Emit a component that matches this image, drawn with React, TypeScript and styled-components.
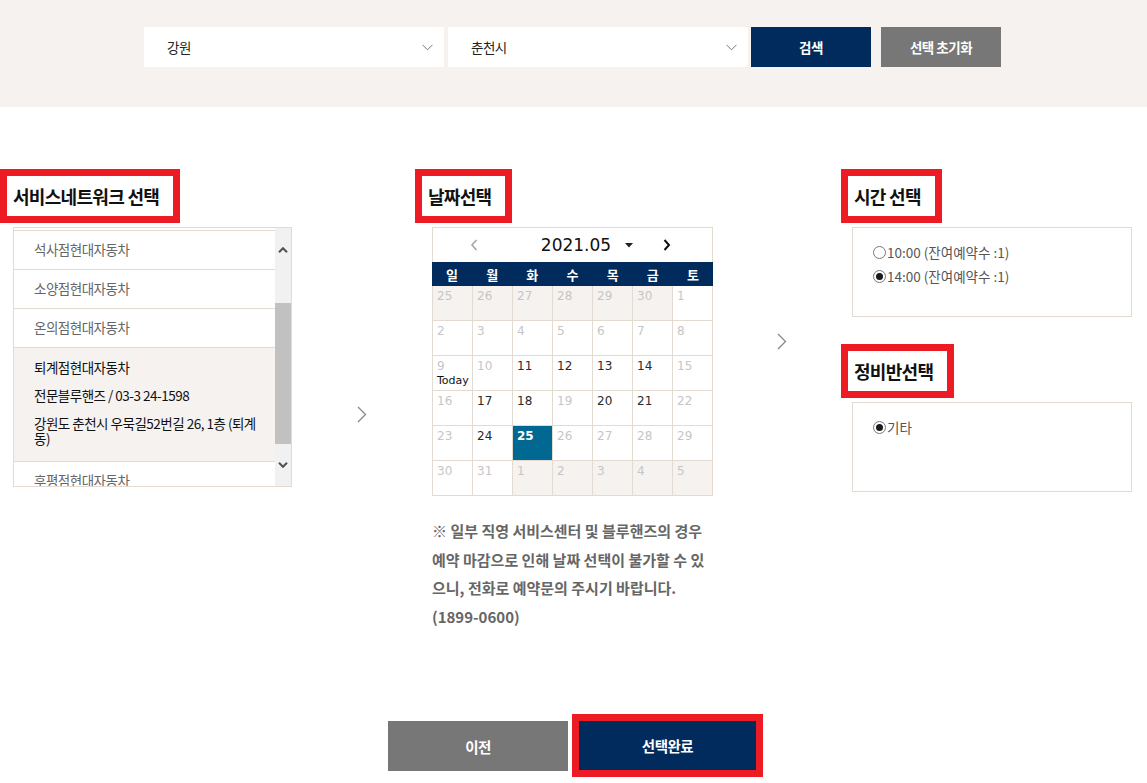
import React, { useLayoutEffect, useRef } from 'react'
import styled, { createGlobalStyle } from 'styled-components'

const KR = `"Noto Sans CJK KR", "Noto Sans", sans-serif`
const NUM = `"DejaVu Sans", Verdana, sans-serif`
const NAVY = '#002b5c'
const LINE = '#e3dbd1'
const RED = '#ed1c24'

const GlobalStyle = createGlobalStyle`
  html, body { margin: 0; padding: 0; background: #fff; }
  body { font-family: ${KR}; color: #222; }
  * { box-sizing: border-box; }
`

const Page = styled.div`
  width: 100%;
  min-height: 100vh;
`

/* ---------- top search bar ---------- */

const TopBar = styled.div`
  height: 107px;
  background: #f5f2f0;
  display: flex;
  justify-content: center;
  padding: 27px 2px 0 0;
`

const SearchRow = styled.div`
  display: flex;
  gap: 4px;
  height: 40px;
`

const Select = styled.div`
  width: 300px;
  height: 40px;
  background: #fff;
  display: flex;
  align-items: center;
  justify-content: space-between;
  padding: 0 11px 0 23px;
  font-size: 13.5px;
  letter-spacing: -0.5px;
  color: #222;
`

const BarButton = styled.button<{ $gray?: boolean }>`
  width: 120px;
  height: 40px;
  border: none;
  margin-left: ${({ $gray }) => ($gray ? 6 : -1)}px;
  background: ${({ $gray }) => ($gray ? '#777' : NAVY)};
  color: #fff;
  font-family: ${KR};
  font-size: 13.5px;
  font-weight: 700;
  letter-spacing: -0.5px;
`

/* ---------- main three columns ---------- */

const Main = styled.div`
  display: flex;
  align-items: flex-start;
  padding-top: 62px;
`

const Column = styled.div<{ $w: number }>`
  flex: none;
  width: ${({ $w }) => $w}px;
  display: flex;
  flex-direction: column;
  align-items: flex-start;
`

const SectionTitle = styled.h2`
  margin: 0 0 4px;
  border: 7px solid ${RED};
  padding: 0 14px 0 6px;
  font-size: 18px;
  font-weight: 700;
  letter-spacing: -0.7px;
  line-height: 40px;
  color: #111;
  white-space: nowrap;
`

const Connector = styled.div<{ $w: number; $top: number; $shift: number }>`
  flex: none;
  width: ${({ $w }) => $w}px;
  padding-top: ${({ $top }) => $top}px;
  padding-left: ${({ $shift }) => $shift}px;
  display: flex;
  justify-content: center;
`

/* ---------- service network list ---------- */

const ListBox = styled.div`
  margin-left: 13px;
  width: 279px;
  height: 260px;
  border: 1px solid ${LINE};
  display: flex;
`

const ListViewport = styled.div`
  width: 261px;
  height: 100%;
  overflow: hidden;
`

const ListItem = styled.div`
  height: 39px;
  border-bottom: 1px solid ${LINE};
  padding: 0 0 2px 20px;
  display: flex;
  align-items: center;
  font-size: 13.5px;
  letter-spacing: -0.5px;
  color: #666;
`

const DetailItem = styled.div`
  background: #f5f2f0;
  border-bottom: 1px solid ${LINE};
  padding: 12px 4px 16px 20px;
  font-size: 13.5px;
  letter-spacing: -0.5px;
  color: #111;
`

const DetailLine = styled.div`
  line-height: 14px;
  white-space: nowrap;
  & + & {
    margin-top: 14px;
  }
`

const AddressLine = styled(DetailLine)`
  line-height: 14.5px;
`

const ScrollBar = styled.div`
  flex: none;
  width: 16px;
  background: #f1f1f1;
  display: flex;
  flex-direction: column;
`

const ScrollButton = styled.div<{ $pad: number }>`
  flex: none;
  height: 40px;
  padding-top: ${({ $pad }) => $pad}px;
  display: flex;
  justify-content: center;
  align-items: flex-start;
`

const ScrollTrack = styled.div`
  flex: 1;
  padding-top: 35px;
`

const ScrollThumb = styled.div`
  height: 141px;
  background: #c1c1c1;
`

/* ---------- calendar ---------- */

const Calendar = styled.div`
  margin-left: 17px;
  width: 281px;
`

const CalHead = styled.div`
  height: 35px;
  border: 1px solid ${LINE};
  border-bottom: none;
  display: flex;
  align-items: center;
  justify-content: center;
  padding-right: 4px;
`

const MonthLabel = styled.span`
  margin-left: 63px;
  font-family: ${NUM};
  font-size: 17px;
  color: #111;
`

const WeekRow = styled.div`
  display: grid;
  grid-template-columns: repeat(7, 1fr);
  height: 24px;
  background: ${NAVY};
  align-items: center;
  text-align: center;
  color: #fff;
  font-size: 13px;
  font-weight: 700;
`

const DayGrid = styled.div`
  display: grid;
  grid-template-columns: repeat(7, 40px);
  border-left: 1px solid ${LINE};
`

type Kind = 'other' | 'off' | 'on' | 'sel'

const DayCell = styled.div<{ $kind: Kind }>`
  height: 35px;
  border-right: 1px solid ${LINE};
  border-bottom: 1px solid ${LINE};
  padding: 3px 0 0 4px;
  font-family: ${NUM};
  font-size: 12px;
  line-height: 15px;
  font-weight: ${({ $kind }) => ($kind === 'sel' ? 700 : 400)};
  background: ${({ $kind }) =>
    $kind === 'other' ? '#f5f2f0' : $kind === 'sel' ? '#006891' : '#fff'};
  color: ${({ $kind }) =>
    $kind === 'on' ? '#2a2a2a' : $kind === 'sel' ? '#fff' : '#c6c6c6'};
`

const TodayMark = styled.span`
  display: block;
  font-size: 11px;
  line-height: 13px;
  color: #111;
`

const Notice = styled.p`
  margin: 21px 0 0 17px;
  font-size: 15px;
  font-weight: 700;
  line-height: 28.5px;
  letter-spacing: 0;
  color: #666;
  white-space: nowrap;
`

/* ---------- right options ---------- */

const OptionBox = styled.div<{ $gap?: number }>`
  margin-left: 11px;
  margin-bottom: ${({ $gap }) => $gap ?? 0}px;
  width: 280px;
  height: 90px;
  border: 1px solid ${LINE};
  padding: 12px 20px 0;
`

const RadioRow = styled.label`
  display: flex;
  align-items: center;
  height: 24px;
  font-size: 13.5px;
  color: #555;
`

const RadioDot = styled.span<{ $checked?: boolean }>`
  flex: none;
  width: 13px;
  height: 13px;
  margin-right: 1px;
  border-radius: 50%;
  border: 1px solid #777;
  background: #fff;
  display: flex;
  align-items: center;
  justify-content: center;
  &::after {
    content: '';
    width: 7px;
    height: 7px;
    border-radius: 50%;
    background: ${({ $checked }) => ($checked ? '#1a1a1a' : 'transparent')};
  }
`

/* ---------- footer ---------- */

const Footer = styled.div`
  display: flex;
  justify-content: center;
  gap: 11px;
  margin-top: 90px;
  padding-right: 3px;
`

const FooterButton = styled.button<{ $primary?: boolean }>`
  width: ${({ $primary }) => ($primary ? 177 : 180)}px;
  height: ${({ $primary }) => ($primary ? 49 : 50)}px;
  border: none;
  background: ${({ $primary }) => ($primary ? NAVY : '#777')};
  outline: ${({ $primary }) => ($primary ? `7px solid ${RED}` : 'none')};
  color: #fff;
  font-family: ${KR};
  font-size: 14.5px;
  font-weight: 700;
  letter-spacing: -0.5px;
`

/* ---------- icons ---------- */

const SelectChevron = () => (
  <svg width="11" height="7" viewBox="0 0 11 7">
    <path d="M0.5 0.8 L5.5 5.8 L10.5 0.8" fill="none" stroke="#777" strokeWidth="1" />
  </svg>
)

const StepArrow = () => (
  <svg width="10" height="17" viewBox="0 0 10 17">
    <path d="M1 1 L8.5 8.5 L1 16" fill="none" stroke="#888" strokeWidth="1.3" />
  </svg>
)

const ScrollArrow = ({ up }: { up?: boolean }) => (
  <svg width="10" height="6" viewBox="0 0 10 6">
    <path
      d={up ? 'M1 5.2 L5 1.2 L9 5.2' : 'M1 0.8 L5 4.8 L9 0.8'}
      fill="none"
      stroke="#505050"
      strokeWidth="2"
    />
  </svg>
)

const CalPrev = () => (
  <svg width="8" height="12" viewBox="0 0 8 12">
    <path d="M6.5 1 L2 6 L6.5 11" fill="none" stroke="#a5a5a5" strokeWidth="1.6" />
  </svg>
)

const CalNext = () => (
  <svg width="8" height="12" viewBox="0 0 8 12" style={{ marginLeft: 30 }}>
    <path d="M1.5 1 L6 6 L1.5 11" fill="none" stroke="#111" strokeWidth="2" />
  </svg>
)

const Caret = () => (
  <svg width="8" height="5" viewBox="0 0 8 5" style={{ marginLeft: 14 }}>
    <path d="M0 0 L8 0 L4 4.5 Z" fill="#222" />
  </svg>
)

/* ---------- data ---------- */

const weekdays = ['일', '월', '화', '수', '목', '금', '토']

type Day = { d: number; k: Kind; today?: boolean }

const offRow = (from: number): Day[] =>
  Array.from({ length: 7 }, (_, i) => ({ d: from + i, k: 'off' as Kind }))

const onDays = new Set([11, 12, 13, 14, 17, 18, 20, 21, 24])

const monthRows = (): Day[][] => {
  const first: Day[] = [25, 26, 27, 28, 29, 30].map((d) => ({ d, k: 'other' as Kind }))
  first.push({ d: 1, k: 'off' })
  const rows: Day[][] = [first, offRow(2)]
  for (let start = 9; start <= 23; start += 7) {
    rows.push(
      Array.from({ length: 7 }, (_, i) => {
        const d = start + i
        const k: Kind = d === 25 ? 'sel' : onDays.has(d) ? 'on' : 'off'
        return { d, k, today: d === 9 }
      })
    )
  }
  rows.push([
    { d: 30, k: 'off' },
    { d: 31, k: 'off' },
    ...[1, 2, 3, 4, 5].map((d) => ({ d, k: 'other' as Kind })),
  ])
  return rows
}

const shopsBefore = ['사농점현대자동차', '석사점현대자동차', '소양점현대자동차', '온의점현대자동차']
const shopsAfter = ['후평점현대자동차']

export default function App() {
  const listRef = useRef<HTMLDivElement>(null)

  useLayoutEffect(() => {
    if (listRef.current) listRef.current.scrollTop = 36
  }, [])

  return (
    <Page>
      <GlobalStyle />
      <TopBar>
        <SearchRow>
          <Select>
            강원
            <SelectChevron />
          </Select>
          <Select>
            춘천시
            <SelectChevron />
          </Select>
          <BarButton>검색</BarButton>
          <BarButton $gray>선택 초기화</BarButton>
        </SearchRow>
      </TopBar>

      <Main>
        <Column $w={292}>
          <SectionTitle>서비스네트워크 선택</SectionTitle>
          <ListBox>
            <ListViewport ref={listRef}>
              {shopsBefore.map((s) => (
                <ListItem key={s}>{s}</ListItem>
              ))}
              <DetailItem>
                <DetailLine>퇴계점현대자동차</DetailLine>
                <DetailLine>전문블루핸즈 / 03-3 24-1598</DetailLine>
                <AddressLine>
                  강원도 춘천시 우묵길52번길 26, 1층 (퇴계
                  <br />
                  동)
                </AddressLine>
              </DetailItem>
              {shopsAfter.map((s) => (
                <ListItem key={s}>{s}</ListItem>
              ))}
            </ListViewport>
            <ScrollBar>
              <ScrollButton $pad={19}>
                <ScrollArrow up />
              </ScrollButton>
              <ScrollTrack>
                <ScrollThumb />
              </ScrollTrack>
              <ScrollButton $pad={16}>
                <ScrollArrow />
              </ScrollButton>
            </ScrollBar>
          </ListBox>
        </Column>

        <Connector $w={123} $top={237} $shift={16}>
          <StepArrow />
        </Connector>

        <Column $w={297}>
          <SectionTitle>날짜선택</SectionTitle>
          <Calendar>
            <CalHead>
              <CalPrev />
              <MonthLabel>2021.05</MonthLabel>
              <Caret />
              <CalNext />
            </CalHead>
            <WeekRow>
              {weekdays.map((w) => (
                <span key={w}>{w}</span>
              ))}
            </WeekRow>
            <DayGrid>
              {monthRows().map((row, ri) =>
                row.map((c, ci) => (
                  <DayCell key={`${ri}-${ci}`} $kind={c.k}>
                    {c.d}
                    {c.today && <TodayMark>Today</TodayMark>}
                  </DayCell>
                ))
              )}
            </DayGrid>
          </Calendar>
          <Notice>
            ※ 일부 직영 서비스센터 및 블루핸즈의 경우
            <br />
            예약 마감으로 인해 날짜 선택이 불가할 수 있
            <br />
            으니, 전화로 예약문의 주시기 바랍니다.
            <br />
            (1899-0600)
          </Notice>
        </Column>

        <Connector $w={129} $top={164} $shift={10}>
          <StepArrow />
        </Connector>

        <Column $w={291}>
          <SectionTitle>시간 선택</SectionTitle>
          <OptionBox $gap={27}>
            <RadioRow>
              <RadioDot />
              10:00 (잔여예약수 :1)
            </RadioRow>
            <RadioRow>
              <RadioDot $checked />
              14:00 (잔여예약수 :1)
            </RadioRow>
          </OptionBox>
          <SectionTitle>정비반선택</SectionTitle>
          <OptionBox>
            <RadioRow>
              <RadioDot $checked />
              기타
            </RadioRow>
          </OptionBox>
        </Column>
      </Main>

      <Footer>
        <FooterButton>이전</FooterButton>
        <FooterButton $primary>선택완료</FooterButton>
      </Footer>
    </Page>
  )
}
